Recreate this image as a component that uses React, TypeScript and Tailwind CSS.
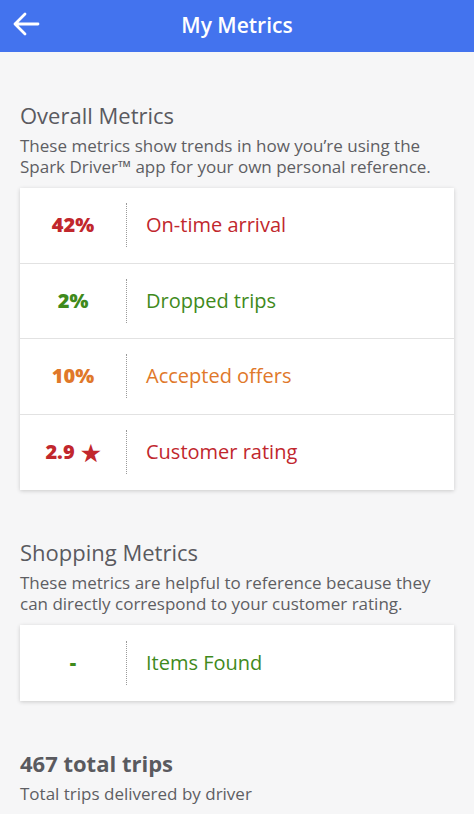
import { ReactNode } from 'react'

const OVERALL = [
  { value: '42%', label: 'On-time arrival', color: 'text-[#c1272d]', star: false },
  { value: '2%', label: 'Dropped trips', color: 'text-[#3f8a1c]', star: false },
  { value: '10%', label: 'Accepted offers', color: 'text-[#e0782a]', star: false },
  { value: '2.9', label: 'Customer rating', color: 'text-[#c1272d]', star: true },
]

function MetricRow({ value, label, color, star }: { value: string; label: string; color: string; star?: boolean }) {
  return (
    <div className="flex items-center h-[75.5px] bg-white border-b border-[#e2e2e2] last:border-b-0">
      <div className={`w-[106px] flex items-center justify-center gap-1.5 text-[20px] font-extrabold ${color}`}>
        <span>{value}</span>
        {star && <span className="text-[22px] leading-none">★</span>}
      </div>
      <div className="h-[44px] border-l border-dotted border-[#9a9a9a]" />
      <div className={`pl-[19px] text-[20px] ${color}`}>{label}</div>
    </div>
  )
}

function Section({ title, text, children }: { title: string; text: ReactNode; children: ReactNode }) {
  return (
    <section>
      <h2 className="text-[22px] text-[#5a5a5f] leading-[28px]">{title}</h2>
      <p className="mt-[6px] text-[17px] leading-[21px] text-[#5e5e63]">{text}</p>
      <div className="mt-[11px] bg-white shadow-[0_1px_4px_rgba(0,0,0,0.18)]">{children}</div>
    </section>
  )
}

export default function App() {
  return (
    <div className="w-[474px] h-[814px] overflow-hidden bg-[#f6f6f7]" style={{ fontFamily: '"Open Sans", "Noto Sans", sans-serif' }}>
      <header className="h-[52px] bg-[#4373ee] flex items-center relative">
        <button className="absolute left-[12px] top-[11px]">
          <svg width="28" height="26" viewBox="0 0 28 26" fill="none" stroke="white" strokeWidth="2.8" strokeLinecap="round" strokeLinejoin="round">
            <path d="M26 13H3M13 3L3 13l10 10" />
          </svg>
        </button>
        <h1 className="w-full text-center text-white text-[21px] font-semibold">My Metrics</h1>
      </header>

      <main className="px-[20px] pt-[49px]">
        <Section
          title="Overall Metrics"
          text={<>These metrics show trends in how you’re using the Spark Driver™ app for your own personal reference.</>}
        >
          {OVERALL.map((m) => (
            <MetricRow key={m.label} {...m} />
          ))}
        </Section>

        <div className="mt-[48px]">
          <Section
            title="Shopping Metrics"
            text="These metrics are helpful to reference because they can directly correspond to your customer rating."
          >
            <MetricRow value="-" label="Items Found" color="text-[#3f8a1c]" />
          </Section>
        </div>

        <div className="mt-[48px]">
          <div className="text-[22px] font-bold text-[#5a5a5f] leading-[28px]">467 total trips</div>
          <div className="mt-[4px] text-[17px] text-[#5e5e63]">Total trips delivered by driver</div>
        </div>
      </main>
    </div>
  )
}
